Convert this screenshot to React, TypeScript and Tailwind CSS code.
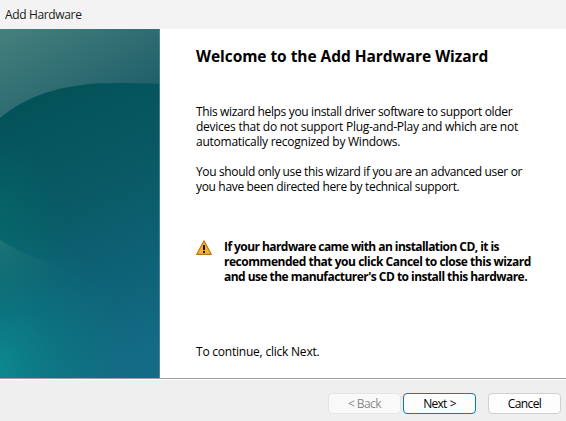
import React from "react";

function Artwork() {
  return (
    <svg width="160" height="349" viewBox="0 29 160 349" className="block shrink-0">
      <defs>
        <linearGradient id="sky" gradientUnits="userSpaceOnUse" x1="15" y1="25" x2="85" y2="150">
          <stop offset="0" stopColor="#457f7d" />
          <stop offset="0.5" stopColor="#2f6d72" />
          <stop offset="1" stopColor="#185a66" />
        </linearGradient>
        <linearGradient id="deep" gradientUnits="userSpaceOnUse" x1="40" y1="90" x2="150" y2="350">
          <stop offset="0" stopColor="#035258" />
          <stop offset="0.35" stopColor="#085963" />
          <stop offset="0.7" stopColor="#0e6276" />
          <stop offset="1" stopColor="#146b86" />
        </linearGradient>
        <radialGradient id="green" gradientUnits="userSpaceOnUse" cx="0" cy="0" r="1" gradientTransform="translate(-5 225) scale(70 85)">
          <stop offset="0" stopColor="#036c68" stopOpacity="0.65" />
          <stop offset="1" stopColor="#036c68" stopOpacity="0" />
        </radialGradient>
        <radialGradient id="teal" gradientUnits="userSpaceOnUse" cx="0" cy="0" r="1" gradientTransform="translate(-10 372) scale(145 150)">
          <stop offset="0" stopColor="#0c8c8f" />
          <stop offset="0.5" stopColor="#0b7b83" stopOpacity="0.6" />
          <stop offset="1" stopColor="#0b747c" stopOpacity="0" />
        </radialGradient>
        <linearGradient id="rim" gradientUnits="userSpaceOnUse" x1="0" y1="240" x2="65" y2="285">
          <stop offset="0" stopColor="#2a7c7e" stopOpacity="0.65" />
          <stop offset="1" stopColor="#267078" stopOpacity="0" />
        </linearGradient>
        <linearGradient id="rimFade" gradientUnits="userSpaceOnUse" x1="0" y1="240" x2="0" y2="320">
          <stop offset="0" stopColor="#fff" />
          <stop offset="1" stopColor="#000" />
        </linearGradient>
        <mask id="rimMask" maskUnits="userSpaceOnUse" x="0" y="29" width="160" height="349">
          <rect x="0" y="29" width="160" height="349" fill="url(#rimFade)" />
        </mask>
      </defs>
      <rect x="0" y="29" width="160" height="349" fill="url(#sky)" />
      <path d="M0 118C26 96 62 83 115 83C130 83 145 83 160 84V378H0Z" fill="url(#deep)" />
      <path d="M0 118C26 96 62 83 115 83C130 83 145 83 160 84V378H0Z" fill="url(#green)" />
      <rect x="0" y="200" width="160" height="178" fill="url(#teal)" />
      <path d="M0 240C16 250 34 260 66 267V325H0Z" fill="url(#rim)" mask="url(#rimMask)" />
      <rect x="159" y="29" width="1" height="349" fill="#5d98a5" fillOpacity="0.65" />
    </svg>
  );
}

function WarningIcon() {
  return (
    <svg width="16" height="16" viewBox="0 0 16 16" className="mt-px block">
      <path d="M8 .8L15.4 14.4H.6Z" fill="#f8b334" stroke="#b87513" strokeWidth="1.1" strokeLinejoin="round" />
      <path d="M7 5H9V10H7ZM7 11H9V13H7Z" fill="#171717" />
    </svg>
  );
}

export default function App() {
  return (
    <div className="flex h-[421px] w-[566px] flex-col overflow-hidden bg-[#efefef] font-['Open_Sans','Noto_Sans',sans-serif] text-[12px] leading-[15px] text-black">
      <header className="h-[29px] shrink-0 bg-[#f3f3f3] pl-[5px] pt-[7px] text-[#1a1a1a]">
        <span className="whitespace-nowrap tracking-[-0.35px]">Add Hardware</span>
      </header>
      <div className="flex h-[349px] shrink-0 bg-white">
        <Artwork />
        <main className="flex flex-col whitespace-nowrap pl-[36px]">
          <h1 className="mt-[16px] h-[22px] text-[15.5px] font-bold leading-[22px] tracking-[-0.05px]">
            Welcome to the Add Hardware Wizard
          </h1>
          <p className="mt-[37px] flex flex-col items-start">
            <span className="tracking-[-0.355px]">This wizard helps you install driver software to support older</span>
            <span className="tracking-[-0.255px]">devices that do not support Plug-and-Play and which are not</span>
            <span className="tracking-[-0.25px]">automatically recognized by Windows.</span>
          </p>
          <p className="mt-[15px] flex flex-col items-start">
            <span className="tracking-[-0.355px]">You should only use this wizard if you are an advanced user or</span>
            <span className="tracking-[-0.335px]">you have been directed here by technical support.</span>
          </p>
          <div className="mt-[45px] flex gap-[12px]">
            <WarningIcon />
            <p className="flex flex-col items-start font-bold">
              <span className="tracking-[-0.56px]">If your hardware came with an installation CD, it is</span>
              <span className="tracking-[-0.47px]">recommended that you click Cancel to close this wizard</span>
              <span className="tracking-[-0.54px]">and use the manufacturer's CD to install this hardware.</span>
            </p>
          </div>
          <p className="mt-[60px] tracking-[-0.22px]">To continue, click Next.</p>
        </main>
      </div>
      <footer className="flex h-[43px] shrink-0 border-t border-[#a0a0a0]">
        <div className="flex w-full items-start border-t border-white pl-[328px] pt-[13px]">
          <button className="h-[21px] w-[73px] rounded-[4px] border border-[#e5e5e5] bg-[#f9f9f9] leading-[19px] tracking-[-0.6px] text-[#8b8b8b]">&lt; Back</button>
          <button className="ml-[2px] h-[21px] w-[73px] rounded-[4px] border border-[#0078d4] bg-[#fdfdfd] leading-[19px] tracking-[-0.8px] [word-spacing:1px]">Next &gt;</button>
          <button className="ml-[12px] h-[21px] w-[73px] rounded-[4px] border border-[#d0d0d0] bg-[#fdfdfd] leading-[19px] tracking-[-0.6px]">Cancel</button>
        </div>
      </footer>
    </div>
  );
}
